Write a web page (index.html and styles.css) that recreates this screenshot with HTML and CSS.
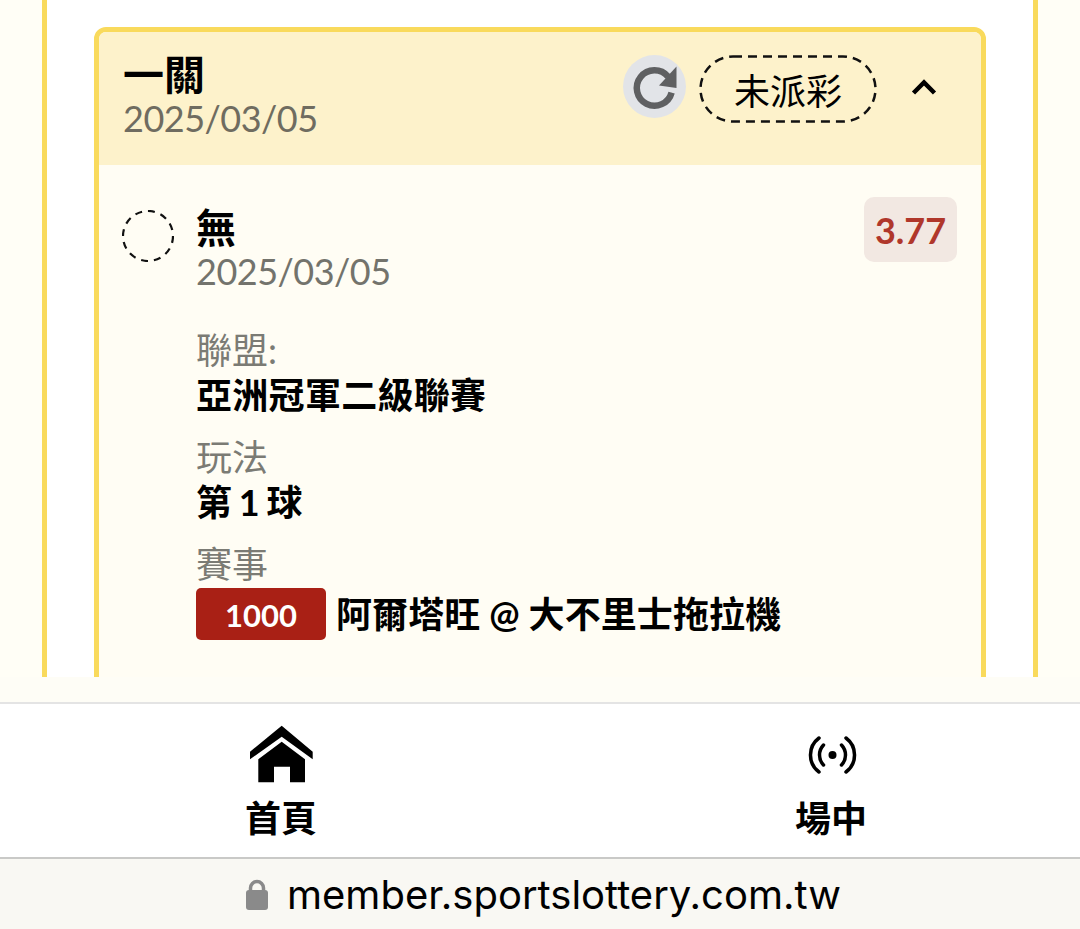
FILE: index.html
```html
<!DOCTYPE html>
<html lang="zh-Hant">
<head>
<meta charset="utf-8">
<title>一關</title>
<link rel="stylesheet" href="styles.css">
</head>
<body>
<div class="page">
  <main class="stage">
    <div class="panel">
      <section class="card">
        <header class="card-head">
          <div class="head-text">
            <div class="title">一關</div>
            <div class="date head-date">2025/03/05</div>
          </div>
          <div class="head-actions">
            <span class="refresh">
              <svg class="refresh-icon" viewBox="0 0 63 63"><path class="refresh-ring" d="M45.060 21.620A17.700 17.700 0 1 0 48.600 37.600"/><path d="M53.500 11.500v21.500L36 30.500z"/></svg>
            </span>
            <span class="status">
              <svg class="status-line" viewBox="0 0 178 68"><rect x="1.500" y="1.500" width="175" height="65" rx="32.500"/></svg>
              未派彩
            </span>
            <svg class="chevron" viewBox="0 0 26 18"><path d="M2.500 15 13 4.500 23.500 15"/></svg>
          </div>
        </header>
        <div class="card-body">
          <svg class="radio" viewBox="0 0 52 52"><circle cx="26" cy="26" r="25"/></svg>
          <div class="bet">
            <div class="bet-top">
              <div>
                <div class="bet-name">無</div>
                <div class="date bet-date">2025/03/05</div>
              </div>
              <span class="odds">3.77</span>
            </div>
            <div class="field">
              <div class="label">聯盟:</div>
              <div class="value">亞洲冠軍二級聯賽</div>
            </div>
            <div class="field">
              <div class="label">玩法</div>
              <div class="value tight">第 1 球</div>
            </div>
            <div class="field">
              <div class="label">賽事</div>
              <div class="value match"><span class="code">1000</span>阿爾塔旺 @ 大不里士拖拉機</div>
            </div>
          </div>
        </div>
      </section>
    </div>
  </main>
  <div class="fade"></div>
  <nav class="tabs">
    <a class="tab">
      <svg class="tab-icon" viewBox="0 0 70 64"><path d="M35.700 1.700 4 27.700v7.600L35.700 12.700l31 22.600v-7.600z"/><path d="M35.700 17.700 12.300 35.300v23H28V42.700h16v15.600h15v-23z"/></svg>
      <span class="tab-label">首頁</span>
    </a>
    <a class="tab">
      <svg class="tab-icon" viewBox="0 0 70 64">
        <circle cx="36.500" cy="31" r="4"/>
        <g class="waves">
          <path d="M27.500 21a14.500 14.500 0 0 0 0 20"/><path d="M45.500 21a14.500 14.500 0 0 1 0 20"/>
          <path d="M23 14a21.200 21.200 0 0 0 0 34"/><path d="M50 14a21.200 21.200 0 0 1 0 34"/>
        </g>
      </svg>
      <span class="tab-label">場中</span>
    </a>
  </nav>
  <footer class="address">
    <svg class="lock" viewBox="0 0 22 31"><path class="shackle" d="M4.500 14V9a6.500 6.500 0 0 1 13 0v5"/><rect y="11" width="22" height="20" rx="3"/></svg>
    <span class="url">member.sportslottery.com.tw</span>
  </footer>
</div>
</body>
</html>
```
FILE: styles.css
```css
* { box-sizing: border-box; }
html, body { margin: 0; height: 100%; }
body {
  background: #fffef6;
  color: #000;
  font-family: Lato, "Noto Sans CJK TC", sans-serif;
}
.page {
  display: flex;
  flex-direction: column;
  height: 929px;
  overflow: hidden;
}
.stage {
  height: 677px;
  padding: 0 42px;
  background: #fffef6;
  overflow: hidden;
}
.panel {
  height: 100%;
  padding: 27px 47px 0;
  background: #fff;
  border-left: 5px solid #f9da5c;
  border-right: 5px solid #f9da5c;
  overflow: hidden;
}
.card {
  height: 800px;
  background: #fffdf4;
  border: 5px solid #f9da5c;
  border-radius: 12px;
  overflow: hidden;
}
.card-head {
  display: flex;
  justify-content: space-between;
  height: 133px;
  padding: 17px 44px 0 24px;
  background: #fdf2cb;
}
.title {
  font-size: 41px;
  line-height: 52px;
  font-weight: 700;
}
.date {
  font-size: 36px;
  line-height: 44px;
  letter-spacing: -0.5px;
  color: #6f6c60;
}
.head-date { margin-top: -5px; }
.head-actions {
  display: flex;
  align-items: flex-start;
  padding-top: 6px;
}
.refresh {
  display: flex;
  width: 63px;
  height: 63px;
  margin-right: 13px;
  border-radius: 50%;
  background: #e2e4e8;
}
.refresh-icon { width: 63px; height: 63px; fill: #5f6062; }
.refresh-ring { fill: none; stroke: #5f6062; stroke-width: 6.500px; }
.status {
  position: relative;
  display: flex;
  align-items: center;
  justify-content: center;
  width: 178px;
  height: 68px;
  font-size: 36px;
}
.status-line {
  position: absolute;
  inset: 0;
  fill: none;
  stroke: #111;
  stroke-width: 2.500px;
  stroke-dasharray: 9 6;
}
.chevron {
  width: 26px;
  height: 18px;
  margin: 23px 0 0 34px;
  fill: none;
  stroke: #000;
  stroke-width: 4.500px;
}
.card-body {
  display: flex;
  padding: 32px 24px 0 23px;
  gap: 23px;
}
.radio {
  flex: none;
  width: 52px;
  height: 52px;
  margin-top: 13px;
  fill: none;
  stroke: #111;
  stroke-width: 2.200px;
  stroke-dasharray: 7 6;
}
.bet { flex: 1; margin-left: -1px; }
.bet-top {
  display: flex;
  justify-content: space-between;
  align-items: flex-start;
  margin-bottom: 35px;
}
.bet-name {
  margin-top: 6px;
  font-size: 40px;
  line-height: 50px;
  font-weight: 700;
}
.bet-date { margin-top: -4px; color: #73736c; }
.odds {
  width: 93px;
  height: 65px;
  border-radius: 10px;
  background: #f2e8e2;
  color: #b0372b;
  font-size: 36px;
  font-weight: 700;
  line-height: 67px;
  text-align: center;
}
.field { margin-bottom: 17px; }
.label {
  font-size: 36px;
  line-height: 45px;
  color: #7b7b74;
}
.value {
  font-size: 36px;
  line-height: 45px;
  font-weight: 700;
  letter-spacing: 0.3px;
}
.tight { letter-spacing: 0; word-spacing: -2px; }
.match {
  display: flex;
  align-items: center;
  margin-top: 1px;
  letter-spacing: 0.1px;
}
.code {
  width: 130px;
  height: 52px;
  margin-right: 10px;
  border-radius: 5px;
  background: #a92015;
  color: #fff;
  font-size: 31px;
  font-weight: 700;
  letter-spacing: 0;
  line-height: 54px;
  text-align: center;
}
.fade {
  height: 25px;
  background: #fefdf6;
}
.tabs {
  display: flex;
  gap: 410px;
  height: 155px;
  padding: 20px 0 0 211px;
  background: #fff;
  border-top: 2px solid #e4e4e4;
}
.tab {
  display: flex;
  flex-direction: column;
  align-items: center;
  width: 140px;
}
.tab-icon { width: 70px; height: 64px; flex: none; }
.waves {
  fill: none;
  stroke: #000;
  stroke-width: 3.500px;
  stroke-linecap: round;
}
.tab-label {
  margin-top: 7px;
  font-size: 36px;
  line-height: 46px;
  font-weight: 700;
}
.address {
  display: flex;
  align-items: center;
  height: 72px;
  padding-left: 246px;
  background: #f9f8f3;
  border-top: 2px solid #c9c9c7;
}
.lock { width: 22px; height: 31px; margin-right: 19px; fill: #8a8a8a; }
.shackle { fill: none; stroke: #8a8a8a; stroke-width: 3.500px; }
.url {
  font-family: Inter, "Liberation Sans", sans-serif;
  font-size: 40px;
  color: #000;
}
```
